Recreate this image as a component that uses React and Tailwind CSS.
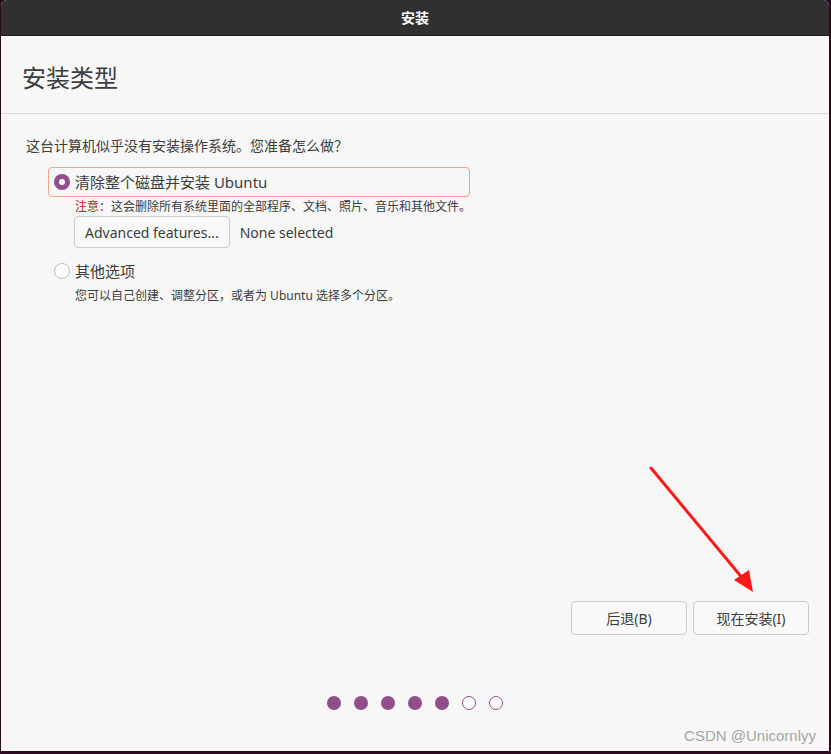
import React from 'react';

const font = { fontFamily: '"Noto Sans", "Noto Sans CJK SC", sans-serif' };

function Radio({ checked }) {
  return checked ? (
    <span className="w-[16px] h-[16px] rounded-full bg-[#924d8b] flex items-center justify-center shrink-0">
      <span className="w-[6px] h-[6px] rounded-full bg-white"></span>
    </span>
  ) : (
    <span className="w-[16px] h-[16px] rounded-full border border-[#bcbcbc] bg-white shrink-0"></span>
  );
}

export default function App() {
  return (
    <div className="w-[831px] h-[754px] bg-[#2c0a22] relative overflow-hidden" style={font}>
      <div className="w-[828px] h-[751px] ml-px flex flex-col bg-[#f7f7f7] rounded-t-[6px] overflow-hidden">
        {/* Title bar */}
        <div className="h-[36px] bg-[#303030] border-b border-[#1c1c1c] flex items-center justify-center shrink-0">
          <span className="text-white text-[14px] font-bold">安装</span>
        </div>

        {/* Page heading */}
        <div className="h-[78px] border-b border-[#dadada] flex items-center pl-[21px] pt-[6px] shrink-0">
          <h1 className="text-[24px] text-[#3c3c3c] leading-none">安装类型</h1>
        </div>

        {/* Body */}
        <div className="flex-1 flex flex-col pt-[22px] pl-[25px] text-[#3c3c3c]">
          <p className="text-[14px] leading-[20px]">这台计算机似乎没有安装操作系统。您准备怎么做？</p>

          <div className="ml-[22px] mt-[11px] w-[422px] h-[30px] border border-[#f0a58a] rounded-[4px] flex items-center pl-[5px] gap-[5px]">
            <Radio checked />
            <span className="text-[15px]">清除整个磁盘并安装 Ubuntu</span>
          </div>

          <p className="ml-[49px] mt-[1px] text-[12px] leading-[18px]">
            <span className="text-[#c01c28]">注意</span>：这会删除所有系统里面的全部程序、文档、照片、音乐和其他文件。
          </p>

          <div className="ml-[48px] flex items-center gap-[10px]">
            <button className="h-[32px] px-[10px] border border-[#cdcdcd] rounded-[4px] bg-[#f9f9f9] text-[14px] text-[#3c3c3c]">
              Advanced features...
            </button>
            <span className="text-[14px]">None selected</span>
          </div>

          <div className="ml-[28px] mt-[12px] flex items-center gap-[5px]">
            <Radio />
            <span className="text-[15px]">其他选项</span>
          </div>
          <p className="ml-[49px] mt-[4px] text-[12px] leading-[18px]">您可以自己创建、调整分区，或者为 Ubuntu 选择多个分区。</p>

          <div className="flex-1"></div>

          <div className="flex justify-end gap-[6px] pr-[20px]">
            <button className="w-[116px] h-[34px] border border-[#cdcdcd] rounded-[4px] bg-[#f9f9f9] text-[14px] text-[#3c3c3c]">后退(B)</button>
            <button className="w-[116px] h-[34px] border border-[#cdcdcd] rounded-[4px] bg-[#f9f9f9] text-[14px] text-[#3c3c3c]">现在安装(I)</button>
          </div>

          <div className="h-[68px] flex items-center gap-[13px] pl-[301px] mt-[34px]">
            {[1, 1, 1, 1, 1, 0, 0].map((f, i) => (
              <span
                key={i}
                className={f ? 'w-[14px] h-[14px] rounded-full bg-[#924d8b]' : 'w-[14px] h-[14px] rounded-full border border-[#924d8b] bg-white'}
              ></span>
            ))}
          </div>
          <div className="h-[26px] -mt-[12px] flex justify-end items-start pr-[13px]">
            <span className="text-[15px] leading-[22px] text-[#a5a5a5]" style={{ fontFamily: '"Liberation Sans", Arial, sans-serif' }}>CSDN @Unicornlyy</span>
          </div>
        </div>
      </div>

      {/* red annotation arrow */}
      <svg className="absolute left-[645px] top-[462px]" width="115" height="135" viewBox="0 0 115 135">
        <path d="M6 6 L99 118" stroke="#ff1a1a" strokeWidth="3" strokeLinecap="round" fill="none" />
        <path d="M108 130 L89 118 L104 108 Z" fill="#ff1a1a" />
      </svg>
    </div>
  );
}
